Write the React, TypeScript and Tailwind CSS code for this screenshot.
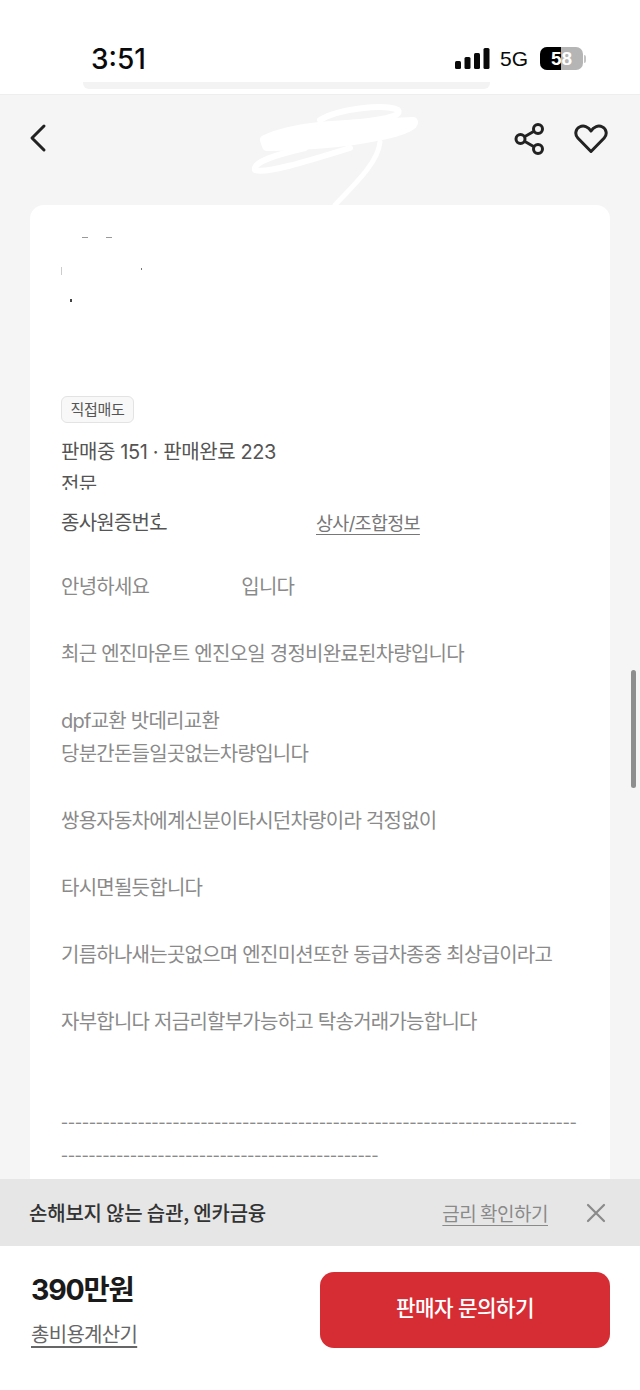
const font = { fontFamily: 'Inter, "Noto Sans CJK KR", "Noto Sans", sans-serif' };
const hangulOnly = { fontFamily: '"Noto Sans CJK KR", "Noto Sans", sans-serif' };

const bodyLines = [
  { text: '최근 엔진마운트 엔진오일 경정비완료된차량입니다', gap: 'mt-[33px]' },
  { text: 'dpf교환 밧데리교환', gap: 'mt-[33.5px]' },
  { text: '당분간돈들일곳없는차량입니다', gap: '' },
  { text: '쌍용자동차에계신분이타시던차량이라 걱정없이', gap: 'mt-[33.5px]' },
  { text: '타시면될듯합니다', gap: 'mt-[33.5px]' },
  { text: '기름하나새는곳없으며 엔진미션또한 동급차종중 최상급이라고', gap: 'mt-[33.5px]' },
  { text: '자부합니다 저금리할부가능하고 탁송거래가능합니다', gap: 'mt-[33.5px]' },
];

function StatusBar() {
  return (
    <div className="relative h-[95px] shrink-0 bg-white border-b border-[#eeeeee]">
      <div className="flex items-center justify-between pt-[41px] pl-[91px] pr-[54px]">
        <span className="pt-[1px] text-[28px] leading-[34px] font-medium text-[#0a0a0a]" style={{ fontFamily: 'Inter, sans-serif' }}>3:51</span>
        <div className="flex items-center gap-[10px]">
          <svg width="35" height="21" viewBox="0 0 35 21" fill="#0a0a0a">
            <rect x="0" y="13" width="6" height="8" rx="1.5" />
            <rect x="9.5" y="9" width="6" height="12" rx="1.5" />
            <rect x="19" y="5" width="6" height="16" rx="1.5" />
            <rect x="28.5" y="0" width="6" height="21" rx="1.5" />
          </svg>
          <span className="text-[21px] leading-[26px] text-[#0a0a0a]" style={{ fontFamily: '"Liberation Sans", sans-serif' }}>5G</span>
          <div className="ml-[2px] flex items-center gap-[1px]">
            <div className="relative flex h-[23px] w-[43px] items-center justify-center overflow-hidden rounded-[7px] bg-[#b5b5b5]">
              <div className="absolute inset-y-0 left-0 w-[21px] bg-black" />
              <span className="relative text-[19px] leading-none font-bold text-white" style={{ fontFamily: '"Liberation Sans", sans-serif' }}>58</span>
            </div>
            <div className="h-[8px] w-[2px] rounded-r bg-[#c4c4c4]" />
          </div>
        </div>
      </div>
      <div className="absolute left-[83px] top-[82px] h-[7px] w-[407px] rounded-b-[6px] bg-[#f3f3f3]" />
    </div>
  );
}

function Header() {
  return (
    <div className="relative flex h-[110px] shrink-0 items-start justify-between pl-[28px] pr-[32px] pt-[27px]">
      <svg width="20" height="32" viewBox="0 0 20 32" fill="none" stroke="#222222" strokeWidth="3" strokeLinecap="round" strokeLinejoin="round">
        <path d="M16 4 L4 16 L16 28" />
      </svg>
      <div className="flex items-center gap-[28px]">
        <svg width="32" height="34" viewBox="0 0 32 34" fill="none" stroke="#222222" strokeWidth="3">
          <circle cx="24" cy="7" r="4.5" />
          <circle cx="6.5" cy="17" r="4.5" />
          <circle cx="24" cy="27" r="4.5" />
          <path d="M10.5 14.7 L20 9.3 M10.5 19.3 L20 24.7" />
        </svg>
        <svg width="34" height="30" viewBox="0 0 34 30" fill="none" stroke="#222222" strokeWidth="3" strokeLinejoin="round">
          <path d="M17 27.5 L3.8 14 C0.5 10.5 1.5 5 5.5 3 C9.5 1 14.5 2.5 17 7 C19.5 2.5 24.5 1 28.5 3 C32.5 5 33.5 10.5 30.2 14 Z" />
        </svg>
      </div>
      {/* scribble over the title */}
      <svg className="absolute left-[245px] top-[5px]" width="185" height="110" viewBox="0 0 185 110" fill="none" stroke="#ffffff" strokeLinecap="round" strokeLinejoin="round">
        <path d="M75 20 C95 8 140 4 153 10 C158 17 135 20 95 24" strokeWidth="6" />
        <path d="M20 40 C50 25 100 25 168 22 C170 30 110 45 22 46 Z" fill="#ffffff" strokeWidth="10" />
        <path d="M60 48 C30 55 8 62 10 70 C20 74 60 62 105 48" strokeWidth="6" />
        <path d="M135 42 C133 62 112 82 90 105" strokeWidth="5" />
      </svg>
    </div>
  );
}

function Card() {
  return (
    <div className="relative mx-[30px] h-[1000px] rounded-t-[14px] bg-white pl-[31px] pr-[30px] pt-[187px] text-[20px] leading-[33.5px] tracking-[-0.75px] text-[#8a8a8a]" style={font}>
      {/* leftovers of the blurred seller name */}
      <div className="absolute left-[52px] top-[32px] h-px w-[6px] bg-[#999999]" />
      <div className="absolute left-[76px] top-[32px] h-px w-[6px] bg-[#999999]" />
      <div className="absolute left-[31px] top-[62px] h-[8px] w-px bg-[#cccccc]" />
      <div className="absolute left-[111px] top-[63px] h-[2px] w-[1px] bg-[#777777]" />
      <div className="absolute left-[40px] top-[94px] h-[3px] w-[2px] bg-[#444444]" />

      <div className="inline-flex h-[27px] w-[73px] items-center justify-center rounded-[6px] border border-[#e3e3e3] bg-[#f8f8f8] text-[15px] leading-none tracking-[-0.3px] text-[#555555]">
        직접매도
      </div>
      <div className="mt-[10px] tracking-[-0.4px] text-[#555555]">판매중 151 · 판매완료 223</div>
      <div className="relative h-[33.5px] text-[#555555]">
        전문
        <div className="absolute left-0 top-[21px] h-[14px] w-[50px] bg-white" />
      </div>
      <div className="relative mt-[4px] text-[#555555]">
        <span>종사원증번호</span>
        <span className="absolute left-[255px] top-0 text-[18.5px] tracking-[-0.7px] text-[#777777] underline underline-offset-4">상사/조합정보</span>
        <div className="absolute left-[99px] top-[4px] h-[14px] w-[10px] bg-white" />
      </div>
      <div className="mt-[31px]">
        안녕하세요<span className="ml-[92px]">입니다</span>
      </div>
      {bodyLines.map((line) => (
        <div key={line.text} className={line.gap}>
          {line.text}
        </div>
      ))}
      <div className="mt-[64px] whitespace-nowrap tracking-[0.03px]" style={hangulOnly}>--------------------------------------------------------------------------</div>
      <div className="whitespace-nowrap tracking-[-0.04px]" style={hangulOnly}>----------------------------------------------</div>
    </div>
  );
}

function Banner() {
  return (
    <div className="absolute bottom-[144px] left-0 flex h-[67px] w-full items-center bg-[#e6e6e7] pl-[29px] pr-[34px]" style={hangulOnly}>
      <span className="flex-1 text-[20px] leading-none font-medium tracking-[-0.2px] text-[#333333]">손해보지 않는 습관, 엔카금융</span>
      <span className="text-[19px] leading-none tracking-[-0.5px] text-[#8a8a8a] underline underline-offset-4">금리 확인하기</span>
      <svg className="ml-[38px]" width="20" height="20" viewBox="0 0 20 20" stroke="#8a8a8a" strokeWidth="2.2" strokeLinecap="round">
        <path d="M2 2 L18 18 M18 2 L2 18" />
      </svg>
    </div>
  );
}

function BottomBar() {
  return (
    <div className="flex h-[144px] shrink-0 justify-between bg-white pl-[31px] pr-[30px] pt-[26px]" style={font}>
      <div className="flex flex-col">
        <span className="text-[28.5px] leading-[36px] font-bold tracking-[-1.2px] text-[#1a1a1a]">390만원</span>
        <span className="mt-[13px] text-[20px] leading-[28px] tracking-[-0.7px] text-[#666666] underline underline-offset-4">총비용계산기</span>
      </div>
      <button className="flex h-[76px] w-[290px] items-center justify-center rounded-[14px] bg-[#d62d35] pb-[2px] text-[21.3px] font-medium tracking-[-0.6px] text-white">
        판매자 문의하기
      </button>
    </div>
  );
}

export default function App() {
  return (
    <div className="relative flex h-[1390px] w-[640px] flex-col overflow-hidden bg-[#f5f5f5]">
      <StatusBar />
      <Header />
      <div className="min-h-0 flex-1 overflow-hidden">
        <Card />
      </div>
      <Banner />
      <BottomBar />
      {/* scroll indicator */}
      <div className="absolute left-[631px] top-[670px] h-[118px] w-[5px] rounded-full bg-[#8e8e8e]" />
    </div>
  );
}
